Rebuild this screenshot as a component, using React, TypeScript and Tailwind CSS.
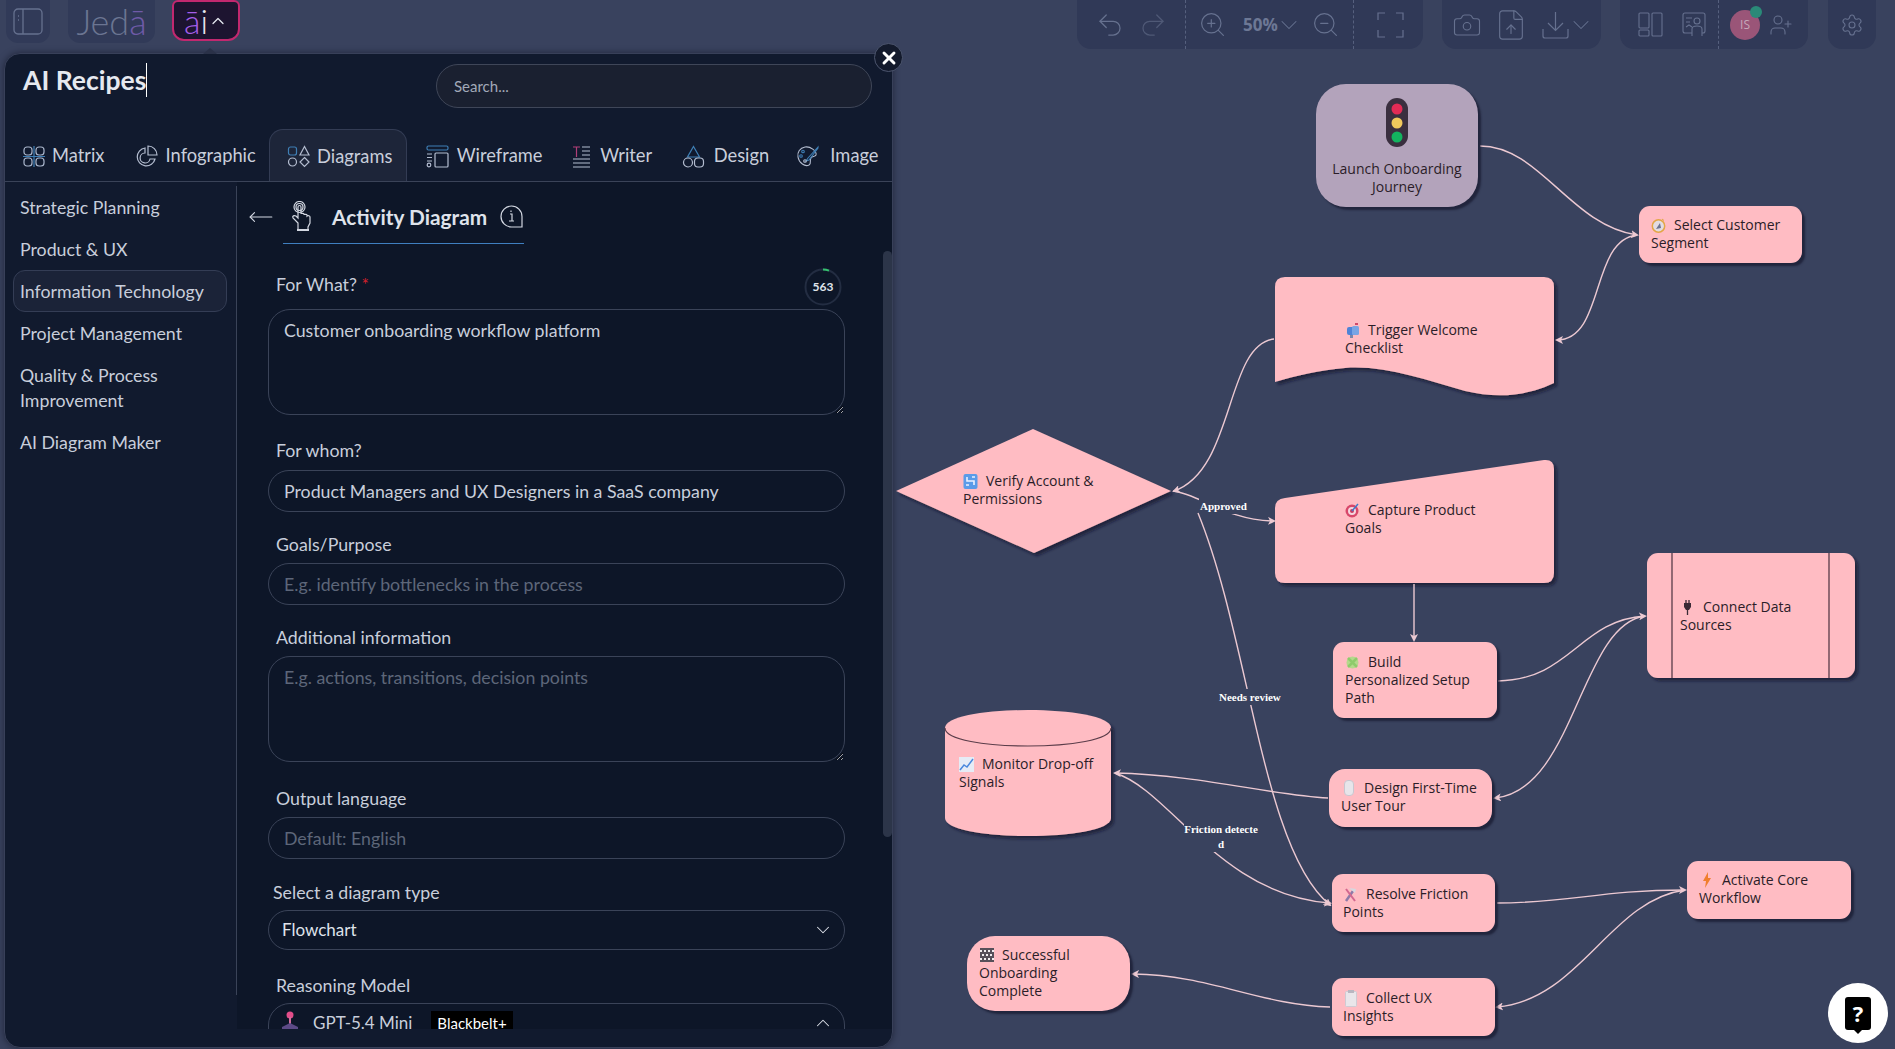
import { ChevronDown, ChevronUp, Camera, FileUp, Redo2, Settings, Undo2, UserPlus, X, ZoomIn, ZoomOut, MoveLeft } from "lucide-react";
import type { ReactNode } from "react";

/* ---------- tab icons ---------- */
const MatrixIcon = () => (
  <svg width="23" height="23" viewBox="0 0 23 23" fill="none" stroke="#aab6cc" strokeWidth="1.2">
    <rect x="1" y="2" width="8" height="8" rx="3" />
    <rect x="13" y="2" width="8" height="8" rx="3" />
    <rect x="1" y="13" width="8" height="8" rx="3" />
    <rect x="13" y="13" width="8" height="8" rx="3" />
    <path d="M11 1v21M0 11.5h22" stroke="#3f7fb5" />
  </svg>
);
const PieIcon = () => (
  <svg width="22" height="22" viewBox="0 0 22 22" fill="none" stroke="#b4bdd0" strokeWidth="1.2">
    <path d="M9 3a9 9 0 1 0 10 11h-5a5 5 0 1 1-5-6z" />
    <path d="M12 1v9h9a9 9 0 0 0-9-9z" />
  </svg>
);
const ShapesIcon = () => (
  <svg width="23" height="23" viewBox="0 0 23 23" fill="none" stroke="#b4bdd0" strokeWidth="1.2">
    <rect x="1.5" y="2" width="8" height="8" rx="2" stroke="#3f7fb5" />
    <path d="M17.5 1.5l4.5 8.5h-9z" />
    <circle cx="5.5" cy="17" r="4" />
    <path d="M17.5 12.5l4.5 4.5-4.5 4.5-4.5-4.5z" />
  </svg>
);
const WireIcon = () => (
  <svg width="23" height="23" viewBox="0 0 23 23" fill="none" stroke="#b4bdd0" strokeWidth="1.2">
    <rect x="1" y="1" width="21" height="4" rx="1.5" stroke="#3f7fb5" />
    <rect x="9" y="8" width="13" height="14" rx="1" />
    <path d="M1 9h5M1 12.5h5M1 16h5" />
    <circle cx="3" cy="20" r="1.8" />
  </svg>
);
const WriterIcon = () => (
  <svg width="19" height="23" viewBox="0 0 19 23" fill="none" stroke="#b4bdd0" strokeWidth="1.2">
    <path d="M1 2h7M4.5 2v10" stroke="#b13f78" />
    <path d="M10 2h8M10 6h8M10 10h8M1 14h17M1 18h17M1 22h17" />
  </svg>
);
const DesignIcon = () => (
  <svg width="23" height="23" viewBox="0 0 23 23" fill="none" stroke="#b4bdd0" strokeWidth="1.2">
    <path d="M11.5 1.5l6 10.5h-12z" stroke="#3f7fb5" />
    <circle cx="6" cy="17.5" r="4.5" />
    <rect x="12.5" y="13" width="9" height="9" rx="3.5" />
  </svg>
);
const PaletteIcon = () => (
  <svg width="23" height="23" viewBox="0 0 23 23" fill="none" stroke="#b4bdd0" strokeWidth="1.1">
    <path d="M9 2c-5 1-8 5-7 10 1 6 7 10 11 8 3-2 0-4 2-7 1-2 4-1 5-3 1-4-6-9-11-8z" />
    <path d="M22 2L12 13l-2 3 3-1L22 3z" stroke="#3f7fb5" />
    <circle cx="7" cy="6.5" r="1.3" stroke="#3f7fb5" />
    <circle cx="5" cy="11" r="1.3" stroke="#3f7fb5" />
    <circle cx="9" cy="16" r="1.3" />
  </svg>
);
const HandIcon = () => (
  <svg width="24" height="31" viewBox="0 0 24 31" fill="none" stroke="#d3d8e2" strokeWidth="1.2">
    <path d="M8 22l-5-5c-1-2 1-3 3-2l2 2V6c0-2 3-2 3 0v7c0-1 3-1 3 0v1c0-1 3-1 3 0v1c1-1 3 0 3 1v6l-2 4v3H8z" />
    <circle cx="9.5" cy="6" r="3.5" />
    <circle cx="9.5" cy="6" r="5.5" />
    <path d="M7 29h12" strokeWidth="2" />
  </svg>
);

/* ---------- little emoji stand-ins on the nodes ---------- */
const Compass = () => (
  <svg width="15" height="15" viewBox="0 0 15 15"><circle cx="7.5" cy="8" r="6.2" fill="#e2dce2" stroke="#e3a645" strokeWidth="1.5" /><path d="M5 11l4-6 1 5z" fill="#6b7390" /><path d="M11 1l2 1.5" stroke="#e3a645" /></svg>
);
const Mailbox = () => (
  <svg width="14" height="15" viewBox="0 0 14 15"><rect x="1" y="4" width="9" height="8" rx="2" fill="#4f83d6" /><rect x="6" y="3" width="7" height="9" rx="1.5" fill="#79a4e4" /><rect x="4" y="12" width="3" height="3" fill="#7a86a8" /><path d="M9 0h3v2H9z" fill="#d04a6a" /></svg>
);
const Shuffle = () => (
  <svg width="15" height="17" viewBox="0 0 15 17"><rect x="0.5" y="1" width="14" height="15" rx="2" fill="#5a9be8" /><path d="M4 4v4h7v4M3 12h3M9 4h3" stroke="#eaf2ff" strokeWidth="1.6" fill="none" /></svg>
);
const Target = () => (
  <svg width="15" height="16" viewBox="0 0 15 16"><circle cx="7" cy="9" r="6.5" fill="#d8476a" /><circle cx="7" cy="9" r="4" fill="#f4d7de" /><circle cx="7" cy="9" r="2" fill="#c93a5f" /><path d="M7 9l6-7" stroke="#3f79c9" strokeWidth="1.5" /></svg>
);
const Sparkle = () => (
  <svg width="15" height="15" viewBox="0 0 15 15"><circle cx="7.5" cy="7.5" r="6" fill="#b5d88c" /><path d="M3 3l9 9M12 3l-9 9" stroke="#8fcb6c" strokeWidth="2.5" /></svg>
);
const Plug = () => (
  <svg width="9" height="15" viewBox="0 0 9 15"><path d="M1 3h7v4l-2 3H3L1 7z" fill="#3a2a35" /><path d="M3 0v3M6 0v3M4.5 10v5" stroke="#3a2a35" strokeWidth="1.3" /></svg>
);
const Chart = () => (
  <svg width="15" height="15" viewBox="0 0 15 15"><rect width="15" height="15" fill="#e6ecf6" /><path d="M1 13l4-5 3 2 6-8" stroke="#4a88dd" strokeWidth="1.5" fill="none" /></svg>
);
const Mouse = () => (
  <svg width="10" height="16" viewBox="0 0 10 16"><rect x="0.5" y="0.5" width="9" height="15" rx="3.5" fill="#e7e5ea" stroke="#c9c6cf" /></svg>
);
const Tools = () => (
  <svg width="15" height="17" viewBox="0 0 15 17"><path d="M3 15L10 5" stroke="#8e7aa8" strokeWidth="2.5" /><path d="M3 3l9 12" stroke="#d3678f" strokeWidth="2" /><path d="M6 2l7 1-1 4z" fill="#d6d8e0" /></svg>
);
const Flag = () => (
  <svg width="14" height="14" viewBox="0 0 14 14"><rect width="14" height="14" fill="#57505a" /><path d="M0 2h2v2H0zM4 2h2v2H4zM8 2h2v2H8zM12 2h2v2h-2zM2 6h2v2H2zM6 6h2v2H6zM10 6h2v2h-2zM0 10h2v2H0zM4 10h2v2H4zM8 10h2v2H8zM12 10h2v2h-2z" fill="#f3eef0" /></svg>
);
const Clip = () => (
  <svg width="12" height="17" viewBox="0 0 12 17"><rect x="0.5" y="1.5" width="11" height="15" rx="1" fill="#e9e6ea" stroke="#cfcbd3" /><rect x="3" y="0" width="6" height="3" fill="#b9b6c0" /></svg>
);
const Bolt = () => (
  <svg width="10" height="16" viewBox="0 0 10 16"><path d="M6 0L1 9h3l-1 7 6-10H6z" fill="#f07f2e" /></svg>
);

const TrafficLight = () => (
  <svg width="22" height="49" viewBox="0 0 22 49">
    <rect width="22" height="49" rx="11" fill="#3a2f3f" />
    <circle cx="11" cy="11" r="5.5" fill="#e22b55" />
    <circle cx="11" cy="25" r="5.5" fill="#f1c95c" />
    <circle cx="11" cy="39" r="5.5" fill="#13b35f" />
  </svg>
);

/* ---------- diagram ---------- */
const textCls = "absolute font-['Open_Sans',sans-serif] text-[14px] leading-[18px] text-[#2b1d28]";

type NodeText = { pos: string; icon: ReactNode; lines: string[] };

const texts: NodeText[] = [
  { pos: "left-[1651px] top-[216px]", icon: <Compass />, lines: ["Select Customer", "Segment"] },
  { pos: "left-[1345px] top-[321px]", icon: <Mailbox />, lines: ["Trigger Welcome", "Checklist"] },
  { pos: "left-[963px] top-[472px]", icon: <Shuffle />, lines: ["Verify Account &", "Permissions"] },
  { pos: "left-[1345px] top-[501px]", icon: <Target />, lines: ["Capture Product", "Goals"] },
  { pos: "left-[1345px] top-[653px]", icon: <Sparkle />, lines: ["Build", "Personalized Setup", "Path"] },
  { pos: "left-[1680px] top-[598px]", icon: <Plug />, lines: ["Connect Data", "Sources"] },
  { pos: "left-[959px] top-[755px]", icon: <Chart />, lines: ["Monitor Drop-off", "Signals"] },
  { pos: "left-[1341px] top-[779px]", icon: <Mouse />, lines: ["Design First-Time", "User Tour"] },
  { pos: "left-[1343px] top-[885px]", icon: <Tools />, lines: ["Resolve Friction", "Points"] },
  { pos: "left-[1699px] top-[871px]", icon: <Bolt />, lines: ["Activate Core", "Workflow"] },
  { pos: "left-[979px] top-[946px]", icon: <Flag />, lines: ["Successful", "Onboarding", "Complete"] },
  { pos: "left-[1343px] top-[989px]", icon: <Clip />, lines: ["Collect UX", "Insights"] },
];

const boxes = [
  "left-[1639px] top-[206px] w-[163px] h-[57px] rounded-[11px]",
  "left-[1333px] top-[642px] w-[164px] h-[76px] rounded-[11px]",
  "left-[1329px] top-[769px] w-[163px] h-[58px] rounded-[16px]",
  "left-[1332px] top-[874px] w-[163px] h-[58px] rounded-[11px]",
  "left-[1687px] top-[861px] w-[164px] h-[58px] rounded-[11px]",
  "left-[967px] top-[936px] w-[163px] h-[75px] rounded-[28px]",
  "left-[1332px] top-[978px] w-[163px] h-[58px] rounded-[11px]",
];

const edges = [
  "M1480 146C1540 146 1570 225 1637 235",
  "M1637 235C1590 240 1605 340 1557 340",
  "M1274 339C1225 345 1235 470 1174 491",
  "M1173 491C1200 494 1225 520 1274 521",
  "M1198 513C1250 640 1262 850 1330 905",
  "M1414 584L1414 640",
  "M1498 681C1570 680 1580 620 1645 616",
  "M1645 616C1580 625 1575 790 1495 798",
  "M1328 798C1270 795 1200 775 1115 773",
  "M1115 773C1170 790 1220 895 1330 903",
  "M1497 903C1570 903 1600 890 1685 890",
  "M1685 890C1610 900 1580 1000 1497 1007",
  "M1330 1007C1260 1005 1210 975 1133 974",
];

function Diagram() {
  return (
    <div className="absolute inset-0">
      <svg className="absolute inset-0" width="1895" height="1049" fill="none">
        <defs>
          <marker id="arr" viewBox="0 0 8 8" refX="6" refY="4" markerWidth="8" markerHeight="8" orient="auto" markerUnits="userSpaceOnUse">
            <path d="M0 0L8 4L0 8L2 4z" fill="#ecc9d2" />
          </marker>
          <filter id="sh" x="-10%" y="-10%" width="120%" height="120%">
            <feDropShadow dx="3" dy="3" stdDeviation="1.5" floodColor="#14152b" floodOpacity="0.65" />
          </filter>
        </defs>
        <g fill="#ffbcc3" filter="url(#sh)">
          {/* Trigger: wavy document */}
          <path d="M1285 277H1544Q1554 277 1554 287V383C1525 397 1495 398 1465 391C1425 380 1385 365 1345 368C1320 370 1295 376 1275 382V287Q1275 277 1285 277Z" />
          {/* Verify: diamond */}
          <path d="M1033 429L1171 491L1034 553L896 491Z" />
          {/* Capture: sloped top */}
          <path d="M1285 498L1544 460Q1554 459 1554 469V573Q1554 583 1544 583H1285Q1275 583 1275 573V508Q1275 499 1285 498Z" />
          {/* Connect: subroutine */}
          <rect x="1647" y="553" width="208" height="125" rx="11" />
          {/* Monitor: cylinder */}
          <path d="M945 728C945 704 1111 704 1111 728V818C1111 842 945 842 945 818Z" />
        </g>
        <path d="M945 728C945 752 1111 752 1111 728" stroke="#5b3d4a" strokeWidth="1.2" />
        <path d="M1672 553V678M1829 553V678" stroke="#4b3340" strokeWidth="1.2" />
        <g stroke="#ecc9d2" strokeWidth="1.4">
          {edges.map((d) => (
            <path key={d} d={d} markerEnd="url(#arr)" />
          ))}
        </g>
      </svg>

      {boxes.map((b) => (
        <div key={b} className={`absolute bg-[#ffbcc3] shadow-[3px_3px_2px_rgba(20,21,43,0.65)] ${b}`} />
      ))}

      {/* Launch node */}
      <div className="absolute left-[1316px] top-[84px] flex h-[123px] w-[162px] flex-col items-center rounded-[30px] bg-[#b3a3bb] pt-[14px] shadow-[3px_3px_2px_rgba(20,21,43,0.65)]">
        <TrafficLight />
        <div className="mt-[13px] text-center font-['Open_Sans',sans-serif] text-[14px] leading-[18px] text-[#2b1d28]">
          Launch Onboarding
          <br />
          Journey
        </div>
      </div>

      {texts.map((t) => (
        <div key={t.lines[0]} className={`${textCls} ${t.pos} whitespace-nowrap`}>
          {t.lines.map((l, i) => (
            <div key={l} className="flex h-[18px] items-center">
              {i === 0 && <span className="mr-[8px] flex w-[15px] justify-center">{t.icon}</span>}
              {l}
            </div>
          ))}
        </div>
      ))}

      {/* edge labels */}
      <div className="absolute left-[1199px] top-[498px] bg-[#39425e] px-[1px] font-['Liberation_Serif',serif] text-[11px] font-bold leading-[16px] text-white">Approved</div>
      <div className="absolute left-[1218px] top-[689px] bg-[#39425e] px-[1px] font-['Liberation_Serif',serif] text-[11px] font-bold leading-[16px] text-white">Needs review</div>
      <div className="absolute left-[1184px] top-[822px] w-[74px] bg-[#39425e] text-center font-['Liberation_Serif',serif] text-[11px] font-bold leading-[15px] text-white">
        Friction detecte
        <br />d
      </div>
    </div>
  );
}

/* ---------- top bar ---------- */
const iconCls = "shrink-0 text-[#66718f]";

function TopBar() {
  return (
    <div className="absolute inset-x-0 top-0 flex h-[49px] items-start">
      <div className="ml-[6px] flex h-[43px] w-[44px] items-center justify-center rounded-b-[12px] bg-[#313a58]">
        <svg width="30" height="27" viewBox="0 0 30 27" fill="none" stroke="#66718f" strokeWidth="1.3">
          <rect x="1" y="1" width="28" height="25" rx="4" />
          <path d="M10 1v25M5 8h1M5 12h1" />
        </svg>
      </div>
      <div className="ml-[18px] flex h-[43px] w-[87px] items-center justify-center rounded-b-[12px] bg-[#313a58] font-['Lato',sans-serif] text-[36px] font-light leading-[43px] text-[#6b7592]">
        Jed<span className="text-[#6f5aa8]">ā</span>
      </div>
      <div className="ml-[17px] flex h-[41px] w-[68px] items-center justify-center rounded-b-[12px] rounded-t-[6px] border-2 border-[#c2286f] bg-[#1d1430] font-['Lato',sans-serif] text-[34px] font-light leading-[37px]">
        <span className="text-[#a45ee8]">ā</span>
        <span className="text-[#e5e7ef]">i</span>
        <ChevronUp size={20} strokeWidth={1.5} className="text-[#e5e7ef]" />
      </div>

      <div className="ml-auto flex h-[49px] w-[346px] items-center rounded-b-[14px] bg-[#303957] pl-[18px]">
        <Undo2 size={30} strokeWidth={1} className={iconCls} />
        <Redo2 size={30} strokeWidth={1} className="ml-[13px] shrink-0 text-[#4f5976]" />
        <div className="ml-[17px] h-full border-l border-dashed border-[#56607e]" />
        <ZoomIn size={29} strokeWidth={1} className={`ml-[12px] ${iconCls}`} />
        <span className="ml-[16px] font-['Open_Sans',sans-serif] text-[17px] font-bold text-[#6d7895]">50%</span>
        <ChevronDown size={28} strokeWidth={0.9} className={`-ml-[3px] ${iconCls}`} />
        <ZoomOut size={29} strokeWidth={1} className={`ml-[8px] ${iconCls}`} />
        <div className="ml-[13px] h-full border-l border-dashed border-[#56607e]" />
        <svg className="ml-[23px]" width="27" height="26" viewBox="0 0 27 26" fill="none" stroke="#66718f" strokeWidth="1.2">
          <path d="M8 1H1v7M19 1h7v7M1 18v7h7M26 18v7h-7" />
        </svg>
      </div>

      <div className="ml-[19px] flex h-[49px] w-[159px] items-center rounded-b-[14px] bg-[#303957] pl-[10px]">
        <Camera size={30} strokeWidth={0.9} className={iconCls} />
        <FileUp size={34} strokeWidth={0.8} className={`ml-[12px] ${iconCls}`} />
        <svg className="ml-[14px] shrink-0" width="27" height="28" viewBox="0 0 27 28" fill="none" stroke="#66718f" strokeWidth="1.2">
          <path d="M13.5 1v18M6 12l7.5 7.5L21 12M1 18v7a2 2 0 0 0 2 2h21a2 2 0 0 0 2-2v-7" />
        </svg>
        <ChevronDown size={28} strokeWidth={0.9} className={`-ml-[2px] ${iconCls}`} />
      </div>

      <div className="ml-[19px] flex h-[49px] w-[188px] items-center rounded-b-[14px] bg-[#303957] pl-[18px]">
        <svg width="25" height="25" viewBox="0 0 25 25" fill="none" stroke="#66718f" strokeWidth="1.1">
          <rect x="1" y="1" width="10" height="15" rx="1" />
          <rect x="1" y="18" width="10" height="6" rx="1" />
          <rect x="14" y="1" width="10" height="23" rx="1" />
        </svg>
        <svg className="ml-[19px]" width="24" height="25" viewBox="0 0 24 25" fill="none" stroke="#66718f" strokeWidth="1.1">
          <rect x="1" y="1" width="22" height="20" rx="2" />
          <path d="M4 6h6M4 10h4M4 15l3-2 3 2" />
          <circle cx="15" cy="9" r="3" />
          <path d="M10 24v-7c0-2 2-3 5-3s5 1 5 3v7" fill="#303957" />
        </svg>
        <div className="ml-[12px] h-full border-l border-dashed border-[#56607e]" />
        <div className="relative ml-[11px] flex h-[30px] w-[30px] items-center justify-center rounded-full bg-[#9a5578] font-['Open_Sans',sans-serif] text-[12px] text-[#c6a8b9]">
          IS
          <div className="absolute -right-[2px] -top-[4px] h-[12px] w-[12px] rounded-full bg-[#2a8a78]" />
        </div>
        <UserPlus size={24} strokeWidth={1.1} className={`ml-[9px] ${iconCls}`} />
      </div>

      <div className="ml-[20px] mr-[19px] flex h-[49px] w-[48px] items-center justify-center rounded-b-[14px] bg-[#303957]">
        <Settings size={24} strokeWidth={1.1} className={iconCls} />
      </div>
    </div>
  );
}

/* ---------- recipes panel ---------- */
const tabs = [
  { label: "Matrix", icon: <MatrixIcon />, cls: "ml-[18px] w-[113px] gap-[6px]" },
  { label: "Infographic", icon: <PieIcon />, cls: "w-[134px] gap-[8px]" },
  { label: "Diagrams", icon: <ShapesIcon />, cls: "w-[138px] gap-[7px] pl-[17px] rounded-t-[14px] border border-b-0 border-[#333c54] bg-[#1d2539]" },
  { label: "Wireframe", icon: <WireIcon />, cls: "w-[166px] gap-[8px] pl-[19px]" },
  { label: "Writer", icon: <WriterIcon />, cls: "w-[110px] gap-[9px]" },
  { label: "Design", icon: <DesignIcon />, cls: "w-[115px] gap-[9px]" },
  { label: "Image", icon: <PaletteIcon />, cls: "w-[96px] gap-[11px]" },
];

const sideItems = ["Strategic Planning", "Product & UX", "Information Technology", "Project Management", "Quality & Process Improvement", "AI Diagram Maker"];

const labelCls = "ml-[8px] text-[17.75px] leading-[24px] text-[#c8cedb]";
const fieldCls =
  "block w-[577px] border border-[#3a4358] bg-transparent px-[15px] text-[17.75px] text-[#c8cedb] outline-none placeholder:text-[#5d6679]";

function RecipesPanel() {
  return (
    <div className="absolute bottom-[1px] left-[4px] top-[53px] flex w-[889px] flex-col rounded-[16px] border border-[#384059] bg-[#111a2e] font-['Lato',sans-serif] shadow-[0_0_6px_rgba(10,12,25,0.5)]">
      {/* pointer under the ai button */}
      <div className="absolute -top-[6px] left-[198px] h-0 w-0 border-x-[7px] border-b-[6px] border-x-transparent border-b-[#2a3148]" />
      <button className="absolute -right-[11px] -top-[11px] z-10 flex h-[29px] w-[29px] items-center justify-center rounded-full border border-[#4d566f] bg-[#131a2c]">
        <X size={20} strokeWidth={3.5} className="text-white" />
      </button>

      {/* title + search */}
      <div className="flex h-[76px] shrink-0 justify-between pl-[18px] pr-[20px]">
        <div className="mt-[9px] flex h-[34px] items-center border-r border-white text-[26.5px] font-bold leading-none text-[#e6e9f0]">AI Recipes</div>
        <input
          placeholder="Search..."
          className="mt-[10px] h-[44px] w-[436px] rounded-full border border-[#3f4658] bg-[#1a2030] px-[17px] text-[15px] text-[#c8cedb] outline-none placeholder:text-[#a2a9b8]"
        />
      </div>

      {/* category tabs */}
      <div className="flex h-[52px] shrink-0 items-end border-b border-[#3a4358]">
        {tabs.map((t) => (
          <div key={t.label} className={`flex h-[52px] items-center pt-[2px] text-[18.3px] text-[#c8cedb] ${t.cls}`}>
            {t.icon}
            <span>{t.label}</span>
          </div>
        ))}
      </div>

      <div className="flex min-h-0 flex-1">
        {/* sub categories */}
        <div className="mb-[52px] mt-[4px] w-[232px] shrink-0 border-r border-[#3a4358] pl-[8px] pr-[9px]">
          {sideItems.map((s) => (
            <div
              key={s}
              className={`rounded-[12px] border py-[7.5px] pl-[6px] text-[17.75px] leading-[25px] text-[#c8cedb] ${
                s === "Information Technology" ? "border-[#343d55] bg-[#1b2338]" : "border-transparent"
              }`}
            >
              {s === "Quality & Process Improvement" ? (
                <>
                  Quality &amp; Process
                  <br />
                  Improvement
                </>
              ) : (
                s
              )}
            </div>
          ))}
        </div>

        {/* form */}
        <div className="relative mb-[18px] min-w-0 flex-1 overflow-hidden bg-[#0d1628]">
          <div className="absolute bottom-[192px] right-0 top-[69px] w-[9px] rounded-full bg-[#2c3549]" />

          <div className="flex items-start pt-[5px]">
            <MoveLeft size={26} strokeWidth={1} className="ml-[11px] mt-[17px] text-[#d3d8e2]" />
            <div className="ml-[9px] flex h-[57px] w-[241px] items-center border-b border-[#3f7fc0] pl-[7px] pt-[3px]">
              <HandIcon />
              <span className="ml-[18px] whitespace-nowrap text-[20.8px] font-bold text-[#dfe3eb]">Activity Diagram</span>
              <svg className="ml-[13px] shrink-0" width="23" height="23" viewBox="0 0 23 23" fill="none" stroke="#d3d8e2" strokeWidth="1.2">
                <path d="M22 22H11.5A10.5 10.5 0 1 1 22 11.5z" />
                <path d="M10 9h2v7M9 16h5M11 5.5v1.5" />
              </svg>
            </div>
          </div>

          <div className="pl-[31px]">
            <div className="mt-[24px] flex w-[577px] items-center justify-between pr-[3px]">
              <div className="mb-[7px] ml-[8px] text-[17.75px] leading-[24px] text-[#c8cedb]">
                For What? <span className="text-[#d3202c]">*</span>
              </div>
              <div className="relative flex h-[38px] w-[38px] items-center justify-center text-[12px] font-bold text-[#dfe3eb]">
                <svg className="absolute inset-0" width="38" height="38" viewBox="0 0 38 38" fill="none">
                  <circle cx="19" cy="19" r="17.5" stroke="#232d42" strokeWidth="2" />
                  <path d="M19 1.5a17.5 17.5 0 0 1 6 1.1" stroke="#35c26f" strokeWidth="2" />
                </svg>
                563
              </div>
            </div>
            <textarea
              readOnly
              defaultValue="Customer onboarding workflow platform"
              className={`${fieldCls} mt-[3px] h-[106px] resize-y rounded-[22px] py-[8px] leading-[25px]`}
            />

            <div className={`${labelCls} mt-[23px]`}>For whom?</div>
            <input readOnly defaultValue="Product Managers and UX Designers in a SaaS company" className={`${fieldCls} mt-[8px] h-[42px] rounded-full`} />

            <div className={`${labelCls} mt-[20px]`}>Goals/Purpose</div>
            <input placeholder="E.g. identify bottlenecks in the process" className={`${fieldCls} mt-[7px] h-[42px] rounded-full`} />

            <div className={`${labelCls} mt-[20px]`}>Additional information</div>
            <textarea
              placeholder="E.g. actions, transitions, decision points"
              className={`${fieldCls} mt-[7px] h-[106px] resize-y rounded-[22px] py-[8px] leading-[25px]`}
            />

            <div className={`${labelCls} mt-[24px]`}>Output language</div>
            <input placeholder="Default: English" className={`${fieldCls} mt-[7px] h-[42px] rounded-full`} />

            <div className="ml-[5px] mt-[21px] text-[17.75px] leading-[24px] text-[#c8cedb]">Select a diagram type</div>
            <div className="mt-[6px] flex h-[40px] w-[577px] items-center justify-between rounded-full border border-[#3a4358] pl-[13px] pr-[10px] text-[17px] text-[#dfe3eb]">
              Flowchart
              <ChevronDown size={22} strokeWidth={1.1} />
            </div>

            <div className={`${labelCls} mt-[23px]`}>Reasoning Model</div>
            <div className="mt-[6px] flex h-[40px] w-[577px] items-center rounded-t-[22px] border border-[#3a4358] pl-[12px] pr-[10px] text-[17px] text-[#c8cedb]">
              <svg width="18" height="24" viewBox="0 0 18 24">
                <circle cx="9" cy="4" r="3.5" fill="#e24d8a" />
                <rect x="8" y="6" width="2" height="8" fill="#d06c9b" />
                <path d="M9 12l8 4v5l-8 3-8-3v-5z" fill="#5c4a86" />
              </svg>
              <span className="ml-[14px]">GPT-5.4 Mini</span>
              <span className="ml-[19px] bg-black px-[6px] py-[1px] text-[15px] leading-[22px] text-white">Blackbelt+</span>
              <ChevronUp size={22} strokeWidth={1.1} className="ml-auto text-[#dfe3eb]" />
            </div>
          </div>
        </div>
      </div>
    </div>
  );
}

export default function App() {
  return (
    <div className="relative h-[1049px] w-[1895px] overflow-hidden bg-[#39425e]">
      <Diagram />
      <TopBar />
      <RecipesPanel />

      {/* help button */}
      <div className="absolute left-[1828px] top-[983px] flex h-[60px] w-[60px] items-center justify-center rounded-full bg-white">
        <div className="relative flex h-[33px] w-[26px] items-center justify-center rounded-[3px] bg-black font-['Open_Sans',sans-serif] text-[22px] font-bold leading-none text-white">
          ?
          <div className="absolute -bottom-[4px] left-[9px] h-0 w-0 border-x-[4px] border-t-[4px] border-x-transparent border-t-black" />
        </div>
      </div>
    </div>
  );
}
